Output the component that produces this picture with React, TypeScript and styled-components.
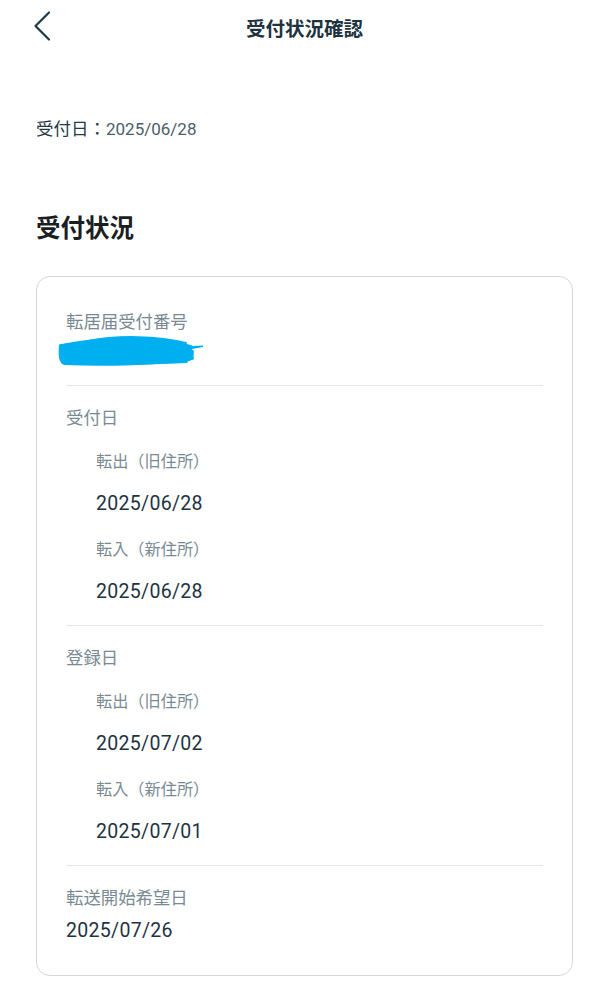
import React from "react";
import styled, { createGlobalStyle } from "styled-components";

const GlobalStyle = createGlobalStyle`
  html, body {
    margin: 0;
    padding: 0;
    background: #ffffff;
  }
  body {
    font-family: Roboto, "Noto Sans CJK JP", "Noto Sans", sans-serif;
    -webkit-font-smoothing: antialiased;
  }
  * { box-sizing: border-box; }
`;

const Page = styled.div`
  width: 609px;
  min-height: 999px;
  background: #ffffff;
  color: #1e3342;
`;

const Header = styled.header`
  position: relative;
  height: 56px;
  display: flex;
  align-items: center;
  justify-content: center;
`;

const BackButton = styled.button`
  position: absolute;
  left: 26px;
  top: 6px;
  width: 32px;
  height: 40px;
  padding: 0;
  border: none;
  background: transparent;
  display: flex;
  align-items: center;
  justify-content: center;
  cursor: pointer;
`;

const Title = styled.h1`
  margin: 0;
  margin-top: -2px;
  font-size: 19.5px;
  font-weight: 700;
  color: #1d3340;
  letter-spacing: 0;
`;

const Body = styled.main`
  padding: 0 36px 40px;
`;

const DateLine = styled.p`
  margin: 61px 0 0;
  font-size: 17.5px;
  line-height: 24px;
  color: #263a46;
`;

const DateLineValue = styled.span`
  color: #4b5e6b;
  font-size: 17px;
`;

const SectionHeading = styled.h2`
  margin: 72px 0 0;
  font-size: 24.5px;
  line-height: 32px;
  font-weight: 700;
  color: #1a1f24;
`;

const Card = styled.section`
  margin-top: 31px;
  border: 1.5px solid #d3d8db;
  border-radius: 14px;
  padding: 0 29px 0 29px;
`;

const Block = styled.div<{ $first?: boolean; $last?: boolean }>`
  padding-top: ${(p) => (p.$first ? "33px" : "20px")};
  padding-bottom: ${(p) => (p.$first ? "17px" : p.$last ? "30px" : "19px")};
  border-bottom: ${(p) => (p.$last ? "none" : "1.5px solid #e2e6e8")};
`;

const Label = styled.div`
  font-size: 17.4px;
  line-height: 24px;
  color: #7a8a93;
`;

const SubGroup = styled.div`
  padding-left: 30px;
  display: flex;
  flex-direction: column;
`;

const SubLabel = styled.div`
  margin-top: 20px;
  font-size: 16.2px;
  line-height: 24px;
  color: #7a8a93;
`;

const Value = styled.div<{ $gap?: number }>`
  margin-top: ${(p) => p.$gap ?? 16}px;
  font-size: 19.5px;
  line-height: 28px;
  color: #1e3342;
  letter-spacing: 0.3px;
`;

const Redaction = styled.svg`
  display: block;
  margin: 2px 0 0 -8px;
`;

const ChevronLeft = () => (
  <svg width="22" height="32" viewBox="0 0 22 32" fill="none">
    <path
      d="M18 2.5 L4.5 16 L18 29.5"
      stroke="#1d3a4a"
      strokeWidth="2.2"
      strokeLinecap="round"
      strokeLinejoin="round"
    />
  </svg>
);

const Scribble = () => (
  <Redaction width="146" height="32" viewBox="0 0 146 32">
    <path
      d="M1 9 C 20 4, 45 2, 75 1 C 100 1, 122 5, 135 10 L 145 9.5 L 145 11 L 134 13 C 137 17, 136 22, 132 25 C 100 29, 50 31, 6 29 C 1 27, 0 20, 1 9 Z"
      fill="#00aff0"
    />
    <path
      d="M3 10 C 40 6, 90 4, 132 11 M4 15 C 50 13, 100 13, 134 16 M3 21 C 50 20, 100 21, 134 22 M5 26 C 40 27, 90 27, 128 25"
      stroke="#00aff0"
      strokeWidth="4"
      strokeLinecap="round"
      fill="none"
    />
    <path
      d="M30 5 C 60 -1, 100 0, 128 7"
      stroke="#00aff0"
      strokeWidth="2"
      strokeLinecap="round"
      fill="none"
    />
  </Redaction>
);

type DatePair = { outLabel: string; outDate: string; inLabel: string; inDate: string };

const DateGroup: React.FC<{ label: string; data: DatePair }> = ({ label, data }) => (
  <Block>
    <Label>{label}</Label>
    <SubGroup>
      <SubLabel>{data.outLabel}</SubLabel>
      <Value>{data.outDate}</Value>
      <SubLabel>{data.inLabel}</SubLabel>
      <Value>{data.inDate}</Value>
    </SubGroup>
  </Block>
);

export default function App() {
  return (
    <Page>
      <GlobalStyle />
      <Header>
        <BackButton aria-label="戻る">
          <ChevronLeft />
        </BackButton>
        <Title>受付状況確認</Title>
      </Header>
      <Body>
        <DateLine>
          受付日：<DateLineValue>2025/06/28</DateLineValue>
        </DateLine>
        <SectionHeading>受付状況</SectionHeading>
        <Card>
          <Block $first>
            <Label>転居届受付番号</Label>
            <Scribble />
          </Block>
          <DateGroup
            label="受付日"
            data={{
              outLabel: "転出（旧住所）",
              outDate: "2025/06/28",
              inLabel: "転入（新住所）",
              inDate: "2025/06/28",
            }}
          />
          <DateGroup
            label="登録日"
            data={{
              outLabel: "転出（旧住所）",
              outDate: "2025/07/02",
              inLabel: "転入（新住所）",
              inDate: "2025/07/01",
            }}
          />
          <Block $last>
            <Label>転送開始希望日</Label>
            <Value $gap={7}>2025/07/26</Value>
          </Block>
        </Card>
      </Body>
    </Page>
  );
}
